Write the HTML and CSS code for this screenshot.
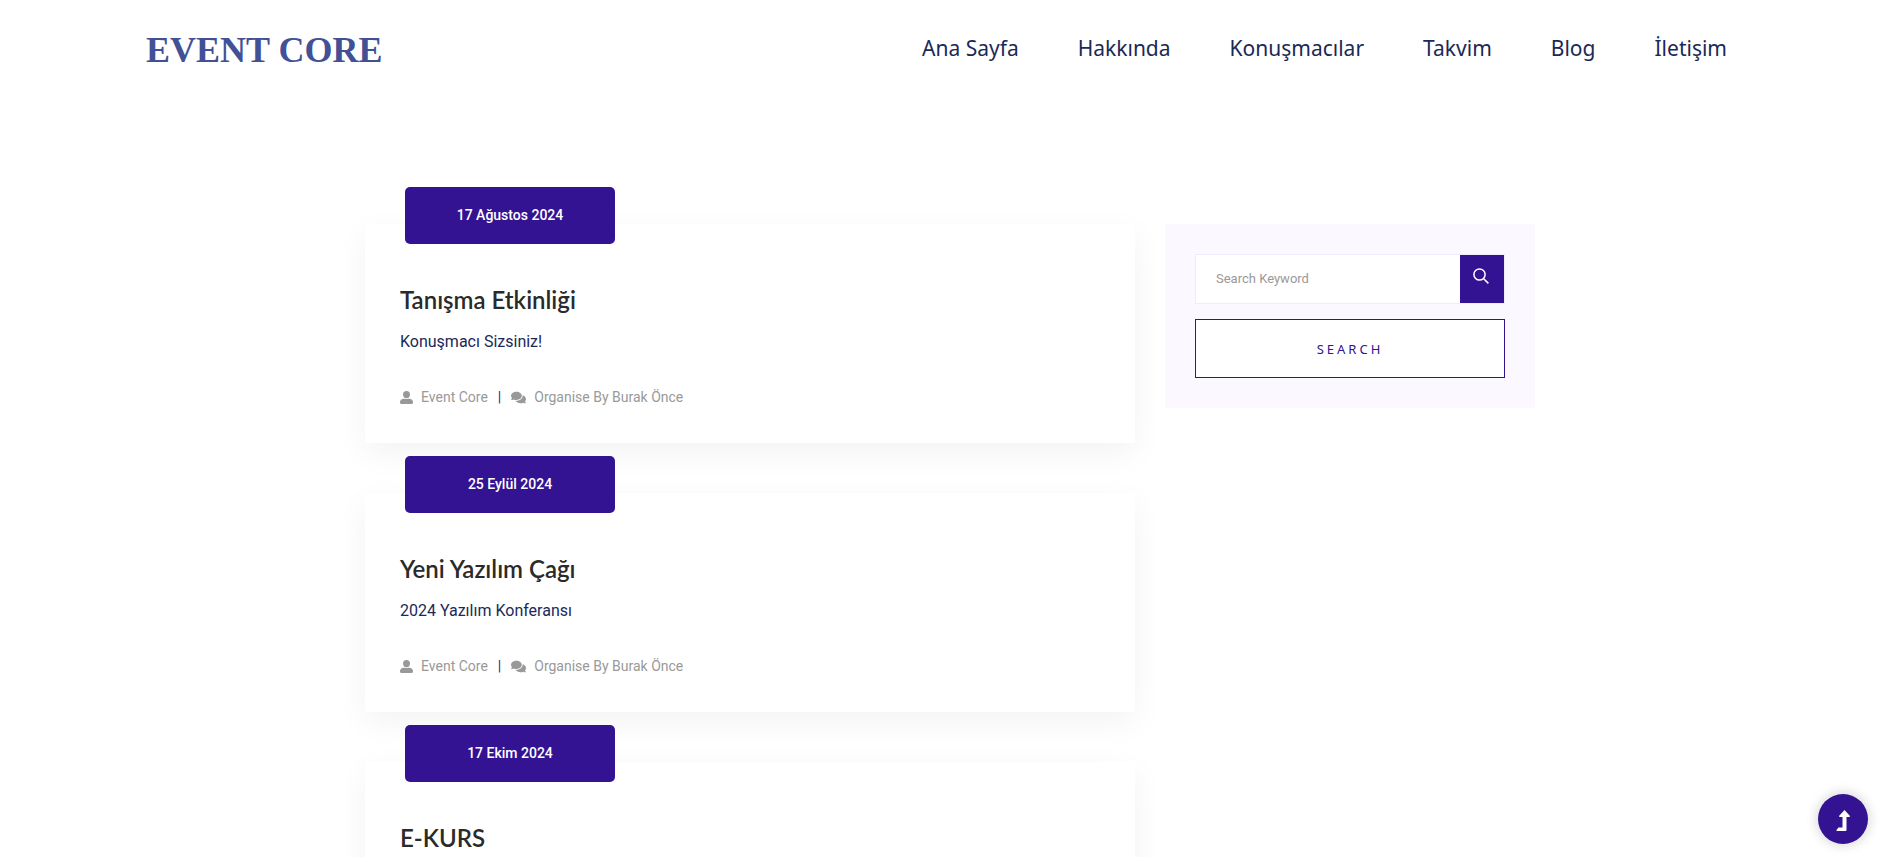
FILE: index.html
```
<!DOCTYPE html>
<html lang="tr">
<head>
<meta charset="utf-8">
<title>Event Core</title>
<link rel="stylesheet" href="styles.css">
</head>
<body>
<svg class="sprite" aria-hidden="true">
  <symbol id="user" viewBox="0 16 448 432" preserveAspectRatio="none"><path d="M224 256a120 120 0 1 0 0-240 120 120 0 0 0 0 240zm96 16h-42a138 138 0 0 1-108 0h-42C57 272 0 313 0 384v24c0 22 18 40 40 40h368c22 0 40-18 40-40v-24c0-71-57-112-128-112z"/></symbol>
  <symbol id="comments" viewBox="0 32 576 448"><path d="M416 192c0-88-93-160-208-160S0 104 0 192c0 34 14 66 38 92-13 30-36 55-36 55-2 3-3 7-1 10 1 3 4 5 8 5 36 0 67-13 88-25 32 15 70 23 111 23 115 0 208-72 208-160zm122 220c24-26 38-58 38-92 0-67-53-124-129-148 1 7 1 13 1 20 0 106-108 192-240 192-11 0-21-1-32-2 32 58 106 98 192 98 41 0 79-9 111-24 21 13 52 24 88 24 4 0 7-2 8-5 1-3 1-7-1-9 0 0-24-25-36-54z"/></symbol>
</svg>
<header class="header">
  <a class="logo" href="#">EVENT CORE</a>
  <nav class="nav">
    <a href="#">Ana Sayfa</a>
    <a href="#">Hakkında</a>
    <a href="#">Konuşmacılar</a>
    <a href="#">Takvim</a>
    <a href="#">Blog</a>
    <a href="#">İletişim</a>
  </nav>
</header>
<main class="content">
  <section class="posts">
    <article class="card">
      <a class="date" href="#">17 Ağustos 2024</a>
      <h2 class="title">Tanışma Etkinliği</h2>
      <p class="text">Konuşmacı Sizsiniz!</p>
      <ul class="meta">
        <li><a href="#"><svg class="icon-user"><use href="#user"/></svg>Event Core</a></li>
        <li><a href="#"><svg class="icon-comments"><use href="#comments"/></svg>Organise By Burak Önce</a></li>
      </ul>
    </article>
    <article class="card">
      <a class="date" href="#">25 Eylül 2024</a>
      <h2 class="title">Yeni Yazılım Çağı</h2>
      <p class="text">2024 Yazılım Konferansı</p>
      <ul class="meta">
        <li><a href="#"><svg class="icon-user"><use href="#user"/></svg>Event Core</a></li>
        <li><a href="#"><svg class="icon-comments"><use href="#comments"/></svg>Organise By Burak Önce</a></li>
      </ul>
    </article>
    <article class="card">
      <a class="date" href="#">17 Ekim 2024</a>
      <h2 class="title">E-KURS</h2>
    </article>
  </section>
  <aside class="sidebar">
    <form class="search">
      <div class="field">
        <input class="keyword" type="text" placeholder="Search Keyword" aria-label="Search Keyword">
        <button class="go" type="button" aria-label="Search">
          <svg viewBox="0 0 16 16"><circle cx="6.5" cy="6.5" r="5.6"/><path d="M10.7 10.7 15.4 15.4"/></svg>
        </button>
      </div>
      <button class="submit" type="button">SEARCH</button>
    </form>
  </aside>
</main>
<a class="top" href="#" aria-label="Top">
  <svg viewBox="0 0 14 21"><path d="M8.500 0 14 6Q14 7 13 7H10.500V20Q10.500 21 9.500 21H1Q0 21 .5 20L2.500 17.500H6.500V7H4Q3 7 3 6z"/></svg>
</a>
</body>
</html>
```
FILE: styles.css
```
* { box-sizing: border-box; }
html { height: 100%; overflow: hidden; }
body {
  margin: 0;
  height: 100%;
  overflow: hidden;
  background: #fff;
  font-family: Roboto, sans-serif;
  color: #1f2b7b;
}
a { color: inherit; text-decoration: none; }
.sprite { display: none; }
.header {
  display: flex;
  justify-content: space-between;
  align-items: center;
  height: 96px;
  padding: 0 165px 0 146px;
}
.logo {
  padding-top: 4px;
  font: 700 36px/48px "Liberation Serif", serif;
  color: #425196;
}
.nav {
  display: flex;
  gap: 59px;
  font: 400 21px/32px "Noto Sans", sans-serif;
  color: #1b2957;
}
.content {
  display: grid;
  grid-template-columns: minmax(0, 77fr) minmax(0, 37fr);
  column-gap: 30px;
  align-items: start;
  max-width: 1208px;
  margin: 0 auto;
  padding: 128px 15px 0 23px;
}
.posts {
  display: flex;
  flex-direction: column;
  gap: 50px;
}
.card {
  position: relative;
  min-height: 219px;
  padding: 60px 35px 28px;
  background: #fff;
  box-shadow: 0 10px 30px rgba(0, 0, 0, 0.05);
}
.date {
  position: absolute;
  top: -37px;
  left: 40px;
  width: 210px;
  border-radius: 5px;
  background: #331391;
  color: #fff;
  font-size: 14px;
  font-weight: 500;
  line-height: 57px;
  text-align: center;
}
.title {
  margin: 0 0 12px;
  font: 600 24px/32px Lato, sans-serif;
  font-variant-ligatures: none;
  color: #2a2a2a;
}
.text {
  margin: 0 0 27px;
  font-size: 16px;
  line-height: 28px;
  color: #1b2957;
}
.meta {
  display: flex;
  margin: 0;
  padding: 0;
  list-style: none;
  font-size: 14px;
  line-height: 28px;
  color: #999;
}
.meta li + li::before {
  content: "|";
  padding: 0 10px;
  color: #331391;
}
.meta svg {
  margin-right: 8px;
  vertical-align: -2px;
  fill: #999;
}
.icon-user { width: 13px; height: 13px; }
.icon-comments { width: 15px; height: 13px; }
.sidebar {
  padding: 30px;
  background: #fbf9ff;
}
.search {
  display: flex;
  flex-direction: column;
  gap: 15px;
}
.field {
  display: flex;
  height: 50px;
  border: 1px solid #f0e9ff;
  background: #fff;
}
.keyword {
  flex: 1;
  min-width: 0;
  padding: 0 20px;
  border: 0;
  background: none;
  font: 400 13px/20px Roboto, sans-serif;
}
.keyword::placeholder { color: #999; opacity: 1; }
.go {
  width: 44px;
  padding: 0 2px 3px 0;
  border: 0;
  background: #331391;
}
.go svg {
  width: 16px;
  height: 16px;
  fill: none;
  stroke: #fff;
  stroke-width: 1.5;
}
.submit {
  height: 59px;
  padding: 0;
  border: 1px solid #331391;
  background: #fff;
  color: #331391;
  font: 400 13px/20px "Noto Sans", sans-serif;
  letter-spacing: 3px;
}
.top {
  position: fixed;
  right: 24px;
  bottom: 13px;
  display: flex;
  align-items: center;
  justify-content: center;
  width: 50px;
  height: 50px;
  border-radius: 50%;
  background: #331391;
  box-shadow: 0 0 10px 3px rgba(108, 98, 98, 0.2);
}
.top svg { width: 14px; height: 21px; margin-top: 3px; fill: #fff; }
```
